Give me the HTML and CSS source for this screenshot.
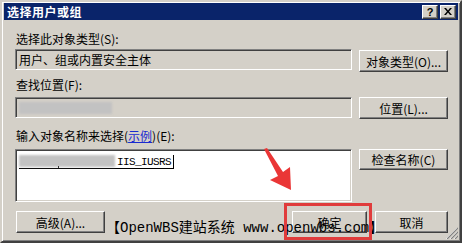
FILE: index.html
```html
<!DOCTYPE html>
<html>
<head>
<meta charset="utf-8">
<link rel="stylesheet" href="styles.css">
</head>
<body>
<div class="dialog">
  <div class="titlebar">
    <span class="title">选择用户或组</span>
    <div class="caps">
      <span class="cap help">?</span>
      <span class="cap close"><svg width="8" height="7" viewBox="0 0 8 7"><path d="M0 0h2l2 2.5L6 0h2L5 3.5 8 7H6L4 4.5 2 7H0l3-3.5z" fill="#000"/></svg></span>
    </div>
  </div>
  <div class="content">
    <div class="label l1">选择此对象类型(S):</div>
    <div class="row r1">
      <div class="field">用户、组或内置安全主体</div>
      <button class="btn">对象类型(O)...</button>
    </div>
    <div class="label l2">查找位置(F):</div>
    <div class="row r2">
      <div class="field"><span class="blur b2"></span></div>
      <button class="btn">位置(L)...</button>
    </div>
    <div class="label l3">输入对象名称来选择(<span class="link">示例</span>)(E):</div>
    <div class="row r3">
      <div class="textarea"><span class="name"><span class="blur b3"></span><span class="dot"></span><span class="iis">IIS_IUSRS</span></span></div>
      <button class="btn short">检查名称(C)</button>
    </div>
    <div class="bottom">
      <button class="btn">高级(A)...</button>
      <div class="okcancel">
        <button class="btn ok">确定</button>
        <button class="btn cancel">取消</button>
      </div>
    </div>
  </div>
  <div class="watermark">【OpenWBS建站系统 www.openwbs.com】</div>
  <div class="redbox"></div>
  <svg class="arrow" width="40" height="50" viewBox="0 0 40 50"><polygon points="1,1 4,0 20,24 27,19 28,42 7,32 15,28" fill="#ea3636"/></svg>
  <svg class="grip" width="13" height="12" viewBox="0 0 13 12">
    <path d="M12 1L1 12M12 5L5 12M12 9L9 12" stroke="#fff" stroke-width="1"/>
    <path d="M13 1L2 12M13 5L6 12M13 9L10 12" stroke="#808080" stroke-width="1.2"/>
  </svg>
</div>
</body>
</html>
```

FILE: styles.css
```css
html, body {
  margin: 0;
  padding: 0;
  background: #ffffff;
}
body {
  font-family: "Noto Sans CJK SC", "Liberation Sans", sans-serif;
  font-size: 12px;
  color: #000;
}
.dialog {
  position: relative;
  box-sizing: border-box;
  width: 462px;
  height: 243px;
  background: #d4d0c8;
  border: 2px solid;
  border-color: #d4d0c8 #404040 #404040 #d4d0c8;
  box-shadow: inset 1px 1px #ffffff, inset -1px -1px #808080;
  padding: 1px 2px 0 2px;
}
.titlebar {
  height: 17px;
  background: #0a246a;
  display: flex;
  align-items: center;
  justify-content: space-between;
  padding: 0 2px 0 3px;
}
.title {
  color: #fff;
  font-weight: bold;
  font-size: 12px;
  letter-spacing: 0.5px;
  line-height: 17px;
}
.caps {
  display: flex;
  gap: 2px;
}
.cap {
  box-sizing: border-box;
  width: 16px;
  height: 14px;
  background: #d4d0c8;
  border: 1px solid;
  border-color: #fff #404040 #404040 #fff;
  box-shadow: inset -1px -1px #808080;
  display: flex;
  align-items: center;
  justify-content: center;
  font-family: "Liberation Sans", sans-serif;
  font-weight: bold;
  font-size: 11px;
  line-height: 12px;
}
.content {
  padding: 0 10px 0 11px;
  display: flex;
  flex-direction: column;
}
.label {
  line-height: 14px;
  height: 14px;
  padding-left: 1px;
  white-space: nowrap;
}
.l1 { margin-top: 12px; }
.l2 { margin-top: 6px; }
.l3 { margin-top: 10px; }
.link {
  color: #1a2ad0;
  text-decoration: underline;
}
.row {
  display: flex;
  gap: 7px;
  align-items: flex-start;
}
.r1 { margin-top: 3px; }
.r2 { margin-top: 5px; }
.r3 { margin-top: 6px; }
.field {
  box-sizing: border-box;
  width: 337px;
  height: 21px;
  border: 1px solid;
  border-color: #808080 #fff #fff #808080;
  box-shadow: inset 1px 1px #404040, inset -1px -1px #d4d0c8;
  padding: 0 0 0 3px;
  line-height: 19px;
  display: flex;
  align-items: center;
  white-space: nowrap;
}
.textarea {
  box-sizing: border-box;
  width: 337px;
  height: 53px;
  background: #fff;
  border: 1px solid;
  border-color: #808080 #fff #fff #808080;
  box-shadow: inset 1px 1px #404040, inset -1px -1px #d4d0c8;
  padding: 3px 0 0 3px;
}
.name {
  position: relative;
  display: inline-flex;
  align-items: flex-end;
  height: 13px;
  border-bottom: 1px solid #000;
  border-right: 1px solid #000;
}
.blur {
  display: block;
  background: #c2c2c2;
  filter: blur(0.8px);
}
.b2 {
  width: 93px;
  height: 12px;
}
.b3 {
  width: 96px;
  height: 12px;
  margin-bottom: 1px;
}
.dot {
  position: absolute;
  left: 39px;
  bottom: 0;
  width: 1px;
  height: 2px;
  background: #333;
}
.iis {
  font-family: "Liberation Mono", monospace;
  font-size: 11px;
  letter-spacing: -0.6px;
  line-height: 12px;
  padding-left: 2px;
  padding-right: 2px;
}
.btn {
  box-sizing: border-box;
  width: 89px;
  height: 22px;
  margin: 0;
  padding: 0;
  background: #d4d0c8;
  border: 1px solid;
  border-color: #fff #404040 #404040 #fff;
  box-shadow: inset -1px -1px #808080;
  font-family: "Noto Sans CJK SC", "Liberation Sans", sans-serif;
  font-size: 12px;
  color: #000;
  white-space: nowrap;
}
.r1 .btn { margin-top: 1px; }
.short { height: 21px; }
.bottom {
  margin-top: 9px;
  display: flex;
  justify-content: space-between;
  padding-left: 1px;
}
.okcancel {
  display: flex;
  gap: 8px;
}
.ok { width: 75px; }
.cancel { width: 73px; }
.watermark {
  position: absolute;
  left: 104px;
  top: 217px;
  line-height: 18px;
  font-family: "Liberation Mono", "Noto Sans CJK SC", monospace;
  font-size: 14px;
  color: #000;
  white-space: nowrap;
}
.redbox {
  position: absolute;
  left: 282px;
  top: 201px;
  box-sizing: border-box;
  width: 88px;
  height: 37px;
  border: 3px solid #e03c3c;
}
.arrow {
  position: absolute;
  left: 261px;
  top: 146px;
}
.grip {
  position: absolute;
  right: 2px;
  bottom: 2px;
}
```
